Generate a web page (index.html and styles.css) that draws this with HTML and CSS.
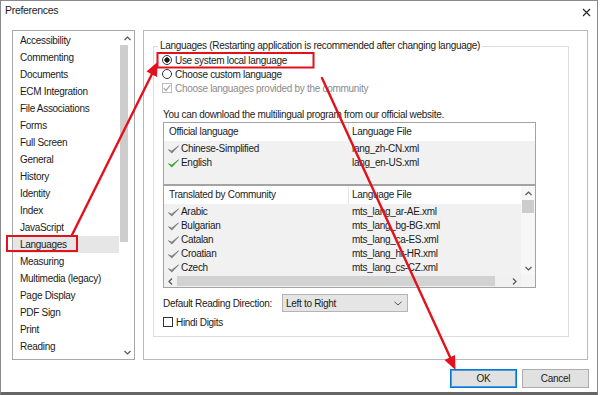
FILE: index.html
```html
<!DOCTYPE html>
<html>
<head>
    <title>Preferences</title>
    <link rel="stylesheet" href="styles.css">
</head>
<body>
    <div class="window">
        <div class="titlebar">
            <span class="title">Preferences</span>
            <svg class="close" width="9" height="9" viewBox="0 0 9 9"><path d="M1 1 L8 8 M8 1 L1 8" stroke="#222" stroke-width="1.1" fill="none"/></svg>
        </div>

        <div class="main">
            <div class="categories">
                <ul class="cat-list">
                    <li>Accessibility</li>
                    <li>Commenting</li>
                    <li>Documents</li>
                    <li>ECM Integration</li>
                    <li>File Associations</li>
                    <li>Forms</li>
                    <li>Full Screen</li>
                    <li>General</li>
                    <li>History</li>
                    <li>Identity</li>
                    <li>Index</li>
                    <li>JavaScript</li>
                    <li class="selected">Languages</li>
                    <li>Measuring</li>
                    <li>Multimedia (legacy)</li>
                    <li>Page Display</li>
                    <li>PDF Sign</li>
                    <li>Print</li>
                    <li>Reading</li>
                </ul>
                <div class="vscroll cat-scroll">
                    <span class="arrow"><svg width="7" height="5" viewBox="0 0 7 5"><polyline points="0.5,4 3.5,1 6.5,4" fill="none" stroke="#555" stroke-width="1.2"/></svg></span>
                    <div class="thumb"></div>
                    <div class="spacer"></div>
                    <span class="arrow"><svg width="7" height="5" viewBox="0 0 7 5"><polyline points="0.5,1 3.5,4 6.5,1" fill="none" stroke="#555" stroke-width="1.2"/></svg></span>
                </div>
            </div>

            <div class="panel">
                <fieldset class="group">
                    <legend>Languages (Restarting application is recommended after changing language)</legend>

                    <div class="option"><span class="radio checked"></span>Use system local language</div>
                    <div class="option"><span class="radio"></span>Choose custom language</div>
                    <div class="option disabled">
                        <span class="checkbox">
                            <svg width="8" height="8" viewBox="0 0 8 8"><polyline points="0.8,4 3,6.5 7.3,1.2" fill="none" stroke="#a8a8a8" stroke-width="1.2"/></svg>
                        </span>Choose languages provided by the community
                    </div>

                    <p class="note">You can download the multilingual program from our official website.</p>

                    <div class="table official">
                        <div class="thead">
                            <div class="col1">Official language</div>
                            <div class="col2">Language File</div>
                        </div>
                        <div class="tbody">
                            <div class="row">
                                <div class="col1"><svg class="tick" width="11" height="9" viewBox="0 0 11 9"><path d="M0.5 4.8 L3.8 8 L10.5 0.8 L3.8 6.2 Z" fill="#7d7d7d" stroke="#7d7d7d" stroke-width="0.9" stroke-linejoin="round"/></svg>Chinese-Simplified</div>
                                <div class="col2">lang_zh-CN.xml</div>
                            </div>
                            <div class="row">
                                <div class="col1"><svg class="tick" width="11" height="9" viewBox="0 0 11 9"><path d="M0.5 4.8 L3.8 8 L10.5 0.8 L3.8 6.2 Z" fill="#37a337" stroke="#37a337" stroke-width="0.9" stroke-linejoin="round"/></svg>English</div>
                                <div class="col2">lang_en-US.xml</div>
                            </div>
                        </div>
                    </div>

                    <div class="table community">
                        <div class="tframe">
                            <div class="tmain">
                                <div class="thead">
                                    <div class="col1">Translated by Community</div>
                                    <div class="col2">Language File</div>
                                </div>
                                <div class="tbody">
                                    <div class="row">
                                        <div class="col1"><svg class="tick" width="11" height="9" viewBox="0 0 11 9"><path d="M0.5 4.8 L3.8 8 L10.5 0.8 L3.8 6.2 Z" fill="#7d7d7d" stroke="#7d7d7d" stroke-width="0.9" stroke-linejoin="round"/></svg>Arabic</div>
                                        <div class="col2">mts_lang_ar-AE.xml</div>
                                    </div>
                                    <div class="row">
                                        <div class="col1"><svg class="tick" width="11" height="9" viewBox="0 0 11 9"><path d="M0.5 4.8 L3.8 8 L10.5 0.8 L3.8 6.2 Z" fill="#7d7d7d" stroke="#7d7d7d" stroke-width="0.9" stroke-linejoin="round"/></svg>Bulgarian</div>
                                        <div class="col2">mts_lang_bg-BG.xml</div>
                                    </div>
                                    <div class="row">
                                        <div class="col1"><svg class="tick" width="11" height="9" viewBox="0 0 11 9"><path d="M0.5 4.8 L3.8 8 L10.5 0.8 L3.8 6.2 Z" fill="#7d7d7d" stroke="#7d7d7d" stroke-width="0.9" stroke-linejoin="round"/></svg>Catalan</div>
                                        <div class="col2">mts_lang_ca-ES.xml</div>
                                    </div>
                                    <div class="row">
                                        <div class="col1"><svg class="tick" width="11" height="9" viewBox="0 0 11 9"><path d="M0.5 4.8 L3.8 8 L10.5 0.8 L3.8 6.2 Z" fill="#7d7d7d" stroke="#7d7d7d" stroke-width="0.9" stroke-linejoin="round"/></svg>Croatian</div>
                                        <div class="col2">mts_lang_hr-HR.xml</div>
                                    </div>
                                    <div class="row">
                                        <div class="col1"><svg class="tick" width="11" height="9" viewBox="0 0 11 9"><path d="M0.5 4.8 L3.8 8 L10.5 0.8 L3.8 6.2 Z" fill="#7d7d7d" stroke="#7d7d7d" stroke-width="0.9" stroke-linejoin="round"/></svg>Czech</div>
                                        <div class="col2">mts_lang_cs-CZ.xml</div>
                                    </div>
                                </div>
                            </div>
                            <div class="vscroll list-scroll">
                                <span class="arrow"><svg width="7" height="5" viewBox="0 0 7 5"><polyline points="0.5,4 3.5,1 6.5,4" fill="none" stroke="#555" stroke-width="1.2"/></svg></span>
                                <div class="thumb"></div>
                                <div class="spacer"></div>
                                <span class="arrow"><svg width="7" height="5" viewBox="0 0 7 5"><polyline points="0.5,1 3.5,4 6.5,1" fill="none" stroke="#555" stroke-width="1.2"/></svg></span>
                            </div>
                        </div>
                        <div class="hscroll">
                            <span class="arrow"><svg width="5" height="7" viewBox="0 0 5 7"><polyline points="4,0.5 1,3.5 4,6.5" fill="none" stroke="#555" stroke-width="1.2"/></svg></span>
                            <div class="thumb"></div>
                            <div class="spacer"></div>
                            <span class="arrow"><svg width="5" height="7" viewBox="0 0 5 7"><polyline points="1,0.5 4,3.5 1,6.5" fill="none" stroke="#555" stroke-width="1.2"/></svg></span>
                            <div class="corner"></div>
                        </div>
                    </div>

                    <div class="direction">
                        <span class="direction-label">Default Reading Direction:</span>
                        <div class="select">
                            <span>Left to Right</span>
                            <svg width="8" height="5" viewBox="0 0 8 5"><polyline points="0.5,0.8 4,4 7.5,0.8" fill="none" stroke="#555" stroke-width="1"/></svg>
                        </div>
                    </div>
                    <div class="option hindi"><span class="checkbox"></span>Hindi Digits</div>
                </fieldset>
            </div>
        </div>

        <div class="footer">
            <button class="btn default">OK</button>
            <button class="btn">Cancel</button>
        </div>
    </div>

    <!-- red markup drawn over the dialog -->
    <svg class="markup" width="600" height="395" viewBox="0 0 600 395">
        <g fill="none" stroke="#e3111b" stroke-width="2">
            <rect x="7" y="236" width="70" height="15"/>
            <rect x="157.5" y="53" width="156" height="14.5"/>
        </g>
        <g stroke="#e3111b" stroke-width="2.4" stroke-linecap="round">
            <line x1="72" y1="235" x2="152" y2="74"/>
            <line x1="322" y1="78" x2="450" y2="357"/>
        </g>
        <g fill="#e3111b">
            <polygon points="157.5,62 157,77 146.5,71.5"/>
            <polygon points="455.5,370 455,355 444.5,360"/>
        </g>
    </svg>
</body>
</html>
```

FILE: styles.css
```css
body {
    position: relative;
    width: 600px;
    height: 395px;
    margin: 0;
    overflow: hidden;
    background: #fff;
    color: #1b1b1b;
    font-family: "Liberation Sans", Arial, sans-serif;
    font-size: 10px;
    letter-spacing: -0.3px;
}

.window {
    box-sizing: border-box;
    display: flex;
    flex-direction: column;
    width: 598px;
    height: 395px;
    border: 1px solid #8a8a8a;
    border-bottom: 3px solid #666;
}

.titlebar {
    display: flex;
    justify-content: space-between;
    align-items: flex-start;
    height: 29px;
    padding: 1px 6px 0 4px;
    box-sizing: border-box;
}

.title {
    line-height: 16px;
    font-size: 10.5px;
}

.close {
    margin-top: 6px;
}

.main {
    display: flex;
    gap: 8px;
    height: 330px;
    padding: 0 8px 0 11px;
}

/* left category list */
.categories {
    box-sizing: border-box;
    display: flex;
    width: 123px;
    border: 1px solid #a8a8a8;
}

.cat-list {
    flex: 1;
    margin: 0;
    padding: 1px 0 0 0;
    list-style: none;
}

.cat-list li {
    height: 17px;
    line-height: 17px;
    padding-left: 7px;
}

.cat-list .selected {
    background: #e6e6e6;
}

.vscroll {
    display: flex;
    flex-direction: column;
    background: #f7f7f7;
}

.vscroll .arrow {
    display: flex;
    align-items: center;
    justify-content: center;
    height: 14px;
}

.vscroll .spacer,
.hscroll .spacer {
    flex: 1;
}

.cat-scroll {
    width: 14px;
    padding-left: 1px;
    background: #fff;
}

.cat-scroll .thumb {
    width: 8px;
    height: 197px;
    background: #cdcdcd;
}

/* right panel */
.panel {
    box-sizing: border-box;
    width: 445px;
    border: 1px solid #b9b9b9;
    padding: 8px 18px 0 9px;
}

.group {
    box-sizing: border-box;
    height: 298px;
    margin: 0;
    padding: 0 8px 0 8px;
    border: 1px solid #dcdcdc;
}

.group legend {
    margin-left: -4px;
    padding: 0 2px;
    line-height: 14px;
}

.option {
    display: flex;
    align-items: center;
    height: 14px;
}

.option.disabled {
    color: #8c8c8c;
}

.radio,
.checkbox {
    box-sizing: border-box;
    display: flex;
    align-items: center;
    justify-content: center;
    width: 10px;
    height: 10px;
    margin-right: 3px;
    border: 1px solid #333;
    background: #fff;
}

.radio {
    border-radius: 50%;
}

.radio.checked {
    background: radial-gradient(circle, #1b1b1b 0 2.4px, #fff 2.9px);
}

.disabled .checkbox {
    border-color: #bcbcbc;
}

.note {
    margin: 13px 0 0 1px;
    line-height: 14px;
}

/* language tables */
.table {
    box-sizing: border-box;
    width: 373px;
    margin-left: 1px;
    border: 1px solid #a3a3a3;
}

.official {
    height: 63px;
    display: flex;
    flex-direction: column;
}

.official .tbody {
    flex: 1;
}

.thead {
    display: flex;
    height: 18px;
    line-height: 18px;
    background: #fff;
}

.tbody {
    padding-top: 1px;
    background: #f1f1f1;
}

.row {
    display: flex;
    height: 14px;
    line-height: 14px;
}

.col1 {
    box-sizing: border-box;
    display: flex;
    align-items: center;
    width: 184px;
    padding-left: 4px;
}

.thead .col1 {
    padding-left: 5px;
}

.col2 {
    flex: 1;
    padding-left: 3px;
}

.thead .col2 {
    border-left: 1px solid #e6e6e6;
}

.row .col2 {
    padding-left: 4px;
}

.tick {
    margin-right: 2px;
}

.tframe {
    display: flex;
}

.tmain {
    flex: 1;
}

.list-scroll {
    width: 14px;
}

.list-scroll .thumb {
    height: 13px;
    margin: 0 1px;
    background: #cdcdcd;
}

.hscroll {
    display: flex;
    align-items: center;
    height: 12px;
    background: #f0f0f0;
}

.hscroll .arrow {
    display: flex;
    justify-content: center;
    width: 13px;
}

.hscroll .thumb {
    width: 318px;
    height: 10px;
    background: #d2d2d2;
}

.hscroll .corner {
    width: 14px;
    height: 12px;
    background: #f4f4f4;
}

.direction {
    display: flex;
    align-items: center;
    margin: 6px 0 0 1px;
}

.direction-label {
    width: 119px;
}

.select {
    box-sizing: border-box;
    display: flex;
    align-items: center;
    justify-content: space-between;
    width: 126px;
    height: 18px;
    padding: 0 5px 0 3px;
    border: 1px solid #b4b4b4;
    background: #e5e5e5;
}

.hindi {
    margin: 3px 0 0 1px;
}

/* dialog buttons */
.footer {
    display: flex;
    justify-content: flex-end;
    gap: 5px;
    padding: 9px 8px 0 0;
}

.btn {
    box-sizing: border-box;
    width: 67px;
    height: 19px;
    padding: 0;
    border: 1px solid #adadad;
    background: #e1e1e1;
    color: #1b1b1b;
    font: inherit;
    letter-spacing: inherit;
}

.btn.default {
    border-color: #0078d7;
    box-shadow: inset 0 0 0 1px #4b9be0;
}

.markup {
    position: absolute;
    top: 0;
    left: 0;
    pointer-events: none;
}
```
